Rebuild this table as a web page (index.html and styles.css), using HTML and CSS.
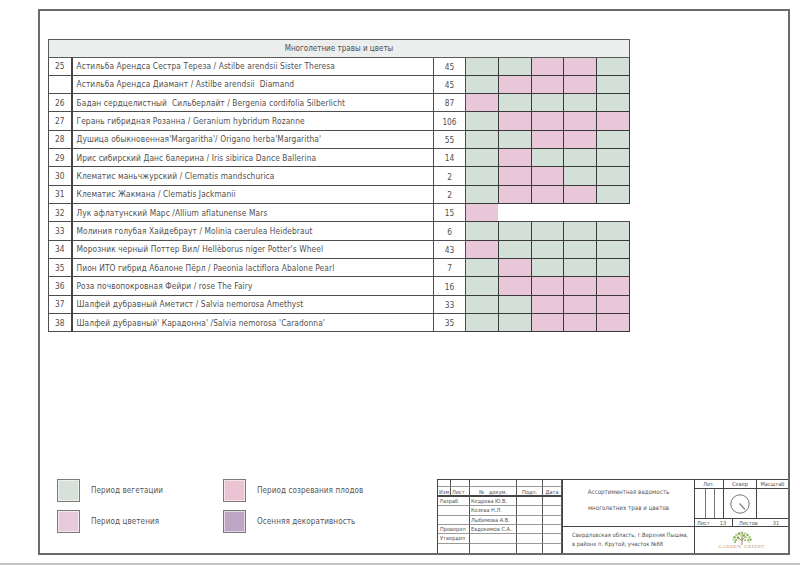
FILE: index.html
```html
<!DOCTYPE html>
<html lang="ru">
<head>
<meta charset="utf-8">
<title>Ассортиментная ведомость</title>
<link rel="stylesheet" href="styles.css">
</head>
<body>
<div class="page">
  <div class="sheet">
    <table class="plants">
      <colgroup>
        <col class="c-num"><col class="c-name"><col class="c-qty">
        <col class="c-m"><col class="c-m"><col class="c-m"><col class="c-m"><col class="c-m">
      </colgroup>
      <tr class="head"><th colspan="8">Многолетние травы и цветы</th></tr>
      <tr><td class="num">25</td><td class="name">Астильба Арендса Сестра Тереза / Astilbe arendsii Sister Theresa</td><td class="qty">45</td><td class="g"></td><td class="g"></td><td class="p"></td><td class="p"></td><td class="g"></td></tr>
      <tr><td class="num"></td><td class="name">Астильба Арендса Диамант / Astilbe arendsii &nbsp;Diamand</td><td class="qty">45</td><td class="g"></td><td class="p"></td><td class="p"></td><td class="p"></td><td class="g"></td></tr>
      <tr><td class="num">26</td><td class="name">Бадан сердцелистный &nbsp;Сильберлайт / Bergenia cordifolia Silberlicht</td><td class="qty">87</td><td class="p"></td><td class="g"></td><td class="g"></td><td class="g"></td><td class="g"></td></tr>
      <tr><td class="num">27</td><td class="name">Герань гибридная Розанна / Geranium hybridum Rozanne</td><td class="qty">106</td><td class="g"></td><td class="p"></td><td class="p"></td><td class="p"></td><td class="p"></td></tr>
      <tr><td class="num">28</td><td class="name">Душица обыкновенная'Margaritha'/ Origano herba'Margaritha'</td><td class="qty">55</td><td class="g"></td><td class="g"></td><td class="p"></td><td class="p"></td><td class="g"></td></tr>
      <tr><td class="num">29</td><td class="name">Ирис сибирский Данс балерина / Iris sibirica Dance Ballerina</td><td class="qty">14</td><td class="g"></td><td class="p"></td><td class="g"></td><td class="g"></td><td class="g"></td></tr>
      <tr><td class="num">30</td><td class="name">Клематис маньчжурский / Clematis mandschurica</td><td class="qty">2</td><td class="g"></td><td class="p"></td><td class="p"></td><td class="g"></td><td class="g"></td></tr>
      <tr><td class="num">31</td><td class="name">Клематис Жакмана / Clematis Jackmanii</td><td class="qty">2</td><td class="g"></td><td class="p"></td><td class="p"></td><td class="p"></td><td class="g"></td></tr>
      <tr><td class="num">32</td><td class="name">Лук афлатунский Марс /Allium aflatunense Mars</td><td class="qty">15</td><td class="p open"></td><td class="blank"></td><td class="blank"></td><td class="blank"></td><td class="blank"></td></tr>
      <tr><td class="num">33</td><td class="name">Молиния голубая Хайдебраут / Molinia caerulea Heidebraut</td><td class="qty">6</td><td class="g"></td><td class="g"></td><td class="g"></td><td class="g"></td><td class="g"></td></tr>
      <tr><td class="num">34</td><td class="name">Морозник черный Поттер Вил/ Hellèborus níger Potter's Wheel</td><td class="qty">43</td><td class="p"></td><td class="g"></td><td class="g"></td><td class="g"></td><td class="g"></td></tr>
      <tr><td class="num">35</td><td class="name">Пион ИТО гибрид Абалоне Пёрл / Paeonia lactiflora Abalone Pearl</td><td class="qty">7</td><td class="g"></td><td class="p"></td><td class="g"></td><td class="g"></td><td class="g"></td></tr>
      <tr><td class="num">36</td><td class="name">Роза почвопокровная Фейри / rose The Fairy</td><td class="qty">16</td><td class="g"></td><td class="p"></td><td class="p"></td><td class="p"></td><td class="p"></td></tr>
      <tr><td class="num">37</td><td class="name">Шалфей дубравный Аметист / Salvia nemorosa Amethyst</td><td class="qty">33</td><td class="g"></td><td class="g"></td><td class="p"></td><td class="p"></td><td class="p"></td></tr>
      <tr><td class="num">38</td><td class="name">Шалфей дубравный' Карадонна' /Salvia nemorosa 'Caradonna'</td><td class="qty">35</td><td class="g"></td><td class="g"></td><td class="p"></td><td class="p"></td><td class="p"></td></tr>
    </table>

    <div class="bottom">
      <div class="legend">
        <div class="lg-item"><span class="lg-box lg-veg"></span><span class="lg-text">Период вегетации</span></div>
        <div class="lg-item"><span class="lg-box lg-fruit"></span><span class="lg-text">Период созревания плодов</span></div>
        <div class="lg-item"><span class="lg-box lg-bloom"></span><span class="lg-text">Период цветения</span></div>
        <div class="lg-item"><span class="lg-box lg-autumn"></span><span class="lg-text">Осенняя декоративность</span></div>
      </div>

      <div class="stamp">
        <div class="st-left">
          <div class="sc"></div><div class="sc"></div><div class="sc"></div><div class="sc"></div><div class="sc"></div>
          <div class="sc hd">Изм</div><div class="sc hd">Лист</div><div class="sc hd ctr">№ &nbsp;&nbsp;докум.</div><div class="sc hd ctr">Подп.</div><div class="sc hd ctr">Дата</div>
          <div class="sc span2">Разраб</div><div class="sc">Кедрова Ю.В.</div><div class="sc"></div><div class="sc"></div>
          <div class="sc span2"></div><div class="sc">Козева Н.Л.</div><div class="sc"></div><div class="sc"></div>
          <div class="sc span2"></div><div class="sc">Лыбимова А.В.</div><div class="sc"></div><div class="sc"></div>
          <div class="sc span2">Проверил</div><div class="sc">Евдокимов С.А.</div><div class="sc"></div><div class="sc"></div>
          <div class="sc span2">Утвердил</div><div class="sc"></div><div class="sc"></div><div class="sc"></div>
          <div class="sc span2 last"></div><div class="sc last"></div><div class="sc last"></div><div class="sc last"></div>
        </div>
        <div class="st-mid">
          <div class="st-title">
            <span>Ассортиментная ведомость</span>
            <span>многолетних трав и цветов</span>
          </div>
          <div class="st-addr">
            <span>Свердловская область, г.Верхняя Пышма,</span>
            <span>в районе п. Крутой, участок №68</span>
          </div>
        </div>
        <div class="st-right">
          <div class="r-head">
            <div class="r-lit">Лит.</div>
            <div class="r-north">Север</div>
            <div class="r-scale">Масштаб</div>
          </div>
          <div class="r-body">
            <div class="r-lit r-lit-split"><span></span><span></span><span></span></div>
            <div class="r-north">
              <svg class="compass" width="22" height="22" viewBox="0 0 22 22">
                <circle cx="11" cy="11" r="9.2" fill="none" stroke="#666" stroke-width="0.9"/>
                <line x1="10.5" y1="10.5" x2="16" y2="16.5" stroke="#555" stroke-width="1.1"/>
              </svg>
            </div>
            <div class="r-scale"></div>
          </div>
          <div class="r-sheet">
            <div class="r-sh1"><span>Лист</span><span>13</span></div>
            <div class="r-sh2"><span>Листов</span><span>31</span></div>
          </div>
          <div class="r-logo">
            <svg class="tree" width="28" height="14" viewBox="0 0 28 14">
              <path d="M14 14 V7 M14 10 L10 6 M14 9 L18 5 M14 8 L14 3" stroke="#8a7250" stroke-width="0.8" fill="none"/>
              <circle cx="14" cy="2" r="1.4" fill="#a7c476"/>
              <circle cx="11" cy="2.6" r="1.3" fill="#7fa85a"/>
              <circle cx="17" cy="2.6" r="1.3" fill="#c3d88e"/>
              <circle cx="8.5" cy="4" r="1.3" fill="#b6cf82"/>
              <circle cx="19.5" cy="4" r="1.3" fill="#8db566"/>
              <circle cx="12.5" cy="4.5" r="1.2" fill="#d2e0a0"/>
              <circle cx="15.8" cy="4.6" r="1.2" fill="#7aa356"/>
              <circle cx="6.5" cy="6.2" r="1.3" fill="#8db566"/>
              <circle cx="21.5" cy="6.2" r="1.3" fill="#b6cf82"/>
              <circle cx="10" cy="6.6" r="1.2" fill="#6e9a4e"/>
              <circle cx="18" cy="6.6" r="1.2" fill="#c8dc96"/>
              <circle cx="5.5" cy="8.6" r="1.2" fill="#c3d88e"/>
              <circle cx="22.5" cy="8.6" r="1.2" fill="#7fa85a"/>
              <circle cx="8" cy="9" r="1.2" fill="#a7c476"/>
              <circle cx="20" cy="9" r="1.2" fill="#a7c476"/>
              <circle cx="11" cy="9.2" r="1" fill="#d2e0a0"/>
              <circle cx="17" cy="9.2" r="1" fill="#8db566"/>
              <circle cx="7" cy="11" r="1" fill="#7fa85a"/>
              <circle cx="21" cy="11" r="1" fill="#c3d88e"/>
            </svg>
            <span class="logo-text">GARDEN&nbsp;&nbsp;EXPERT</span>
          </div>
        </div>
      </div>
    </div>
  </div>
</div>
</body>
</html>
```
FILE: styles.css
```css
html, body {
  margin: 0;
  padding: 0;
  background: #ffffff;
}

.page {
  width: 800px;
  height: 565px;
  box-sizing: border-box;
  padding: 9px 0 0 38px;
  border-bottom: 2px solid #c4c4c4;
  overflow: hidden;
  font-family: "Liberation Sans Narrow", "DejaVu Sans Condensed", "Liberation Sans", sans-serif;
  color: #4a4a4a;
}

.sheet {
  width: 752px;
  height: 546px;
  box-sizing: border-box;
  border: 2px solid #6a6a6a;
  display: flex;
  flex-direction: column;
}

/* ---------- main table ---------- */
.plants {
  margin: 28px 0 0 8px;
  border-collapse: collapse;
  table-layout: fixed;
  width: 581px;
  font-size: 8.3px;
  color: #505050;
}

.c-num { width: 23px; }
.c-name { width: 362px; }
.c-qty { width: 32px; }
.c-m { width: 32.8px; }

.plants tr { height: 18.33px; }
.plants tr.head { height: 17.5px; }

.plants th {
  font-weight: normal;
  font-size: 8px;
  background: #eceeee;
  text-align: center;
  border: 1px solid #5a5a5a;
  padding: 0;
}

.plants td {
  border: 1px solid #4d4d4d;
  padding: 0;
  white-space: nowrap;
  overflow: hidden;
}

.plants td.num {
  text-align: center;
  border-right: 2px solid #444;
}

.plants td.name {
  padding-left: 4px;
  letter-spacing: 0.1px;
}

.plants td.qty {
  text-align: center;
  padding-top: 1px;
}

.plants td.g { background: #d3e0d7; border-color: #3a3a3a; }
.plants td.p { background: #e8c7d8; border-color: #3a3a3a; }
.plants td.p.open { border-right-style: hidden; }

.plants td.blank {
  background: #ffffff;
  border-left-style: hidden;
  border-right-style: hidden;
}

/* ---------- bottom zone ---------- */
.bottom {
  margin-top: auto;
  display: flex;
  justify-content: space-between;
  align-items: flex-start;
}

.legend {
  margin-left: 17px;
  display: grid;
  grid-template-columns: 166px auto;
  row-gap: 8px;
}

.lg-item {
  display: flex;
  align-items: center;
}

.lg-box {
  width: 23px;
  height: 23px;
  box-sizing: border-box;
  border: 1px solid #7a7a7a;
  box-shadow: inset 0 0 0 1px rgba(255, 255, 255, 0.55);
}

.lg-veg { background: #d5e1d9; }
.lg-fruit { background: #ebc3d3; }
.lg-bloom { background: #e9c9dc; }
.lg-autumn { background: #bea6c6; }

.lg-text {
  margin-left: 11px;
  font-size: 8px;
  letter-spacing: 0.1px;
  color: #555;
}

/* ---------- stamp ---------- */
.stamp {
  display: flex;
  width: 351px;
  height: 74px;
  box-sizing: border-box;
  border-top: 1px solid #444;
  border-left: 1px solid #444;
  font-size: 5.6px;
  color: #555;
}

.st-left {
  width: 124px;
  display: grid;
  grid-template-columns: 13px 19px 47px 26px 19px;
  grid-template-rows: 7px 10px repeat(6, 1fr);
}

.sc {
  box-sizing: border-box;
  border-right: 1px solid #555;
  border-bottom: 1px solid #9a9a9a;
  display: flex;
  align-items: center;
  padding-left: 1px;
  white-space: nowrap;
  overflow: hidden;
}

.sc.hd {
  border-bottom: 2px solid #444;
  padding-top: 2px;
}

.sc.ctr { justify-content: center; padding-left: 0; }
.sc.span2 { grid-column: span 2; padding-left: 2px; }
.sc.last { border-bottom: none; }

.st-mid {
  width: 133px;
  box-sizing: border-box;
  border-left: 1px solid #444;
  border-right: 1px solid #444;
  display: flex;
  flex-direction: column;
}

.st-title {
  height: 47px;
  box-sizing: border-box;
  border-bottom: 1px solid #444;
  display: flex;
  flex-direction: column;
  align-items: center;
  justify-content: center;
  gap: 9px;
  padding-bottom: 8px;
  font-size: 6.2px;
}

.st-addr {
  flex: 1;
  display: flex;
  flex-direction: column;
  padding: 4px 0 0 9px;
  line-height: 9px;
  font-size: 5.8px;
}

.st-right {
  flex: 1;
  display: flex;
  flex-direction: column;
}

.r-head, .r-body, .r-sheet {
  display: flex;
  box-sizing: border-box;
  border-bottom: 1px solid #444;
}

.r-head { height: 9px; }
.r-body { height: 30px; }
.r-sheet { height: 8px; }

.r-lit, .r-north {
  box-sizing: border-box;
  border-right: 1px solid #444;
}

.r-lit { width: 29px; }
.r-north { width: 33px; }
.r-scale { flex: 1; }

.r-head > div {
  display: flex;
  align-items: center;
  justify-content: center;
}

.r-lit-split {
  display: flex;
}

.r-lit-split span {
  box-sizing: border-box;
  border-right: 1px solid #777;
}

.r-lit-split span:nth-child(1) { width: 11px; }
.r-lit-split span:nth-child(2) { width: 9px; }
.r-lit-split span:nth-child(3) { width: 8px; border-right: none; }

.r-body .r-north {
  display: flex;
  align-items: center;
  justify-content: center;
}

.r-sh1, .r-sh2 {
  display: flex;
  align-items: center;
  box-sizing: border-box;
}

.r-sh1 {
  width: 38px;
  border-right: 1px solid #444;
  padding-left: 2px;
  gap: 10px;
}

.r-sh2 {
  flex: 1;
  padding-left: 6px;
  gap: 15px;
}

.r-logo {
  flex: 1;
  display: flex;
  flex-direction: column;
  align-items: center;
  justify-content: center;
}

.tree { display: block; }

.logo-text {
  margin-top: -1px;
  font-family: "Liberation Serif", serif;
  font-size: 5px;
  letter-spacing: 0.3px;
  color: #b5a07c;
  line-height: 5px;
}
```
